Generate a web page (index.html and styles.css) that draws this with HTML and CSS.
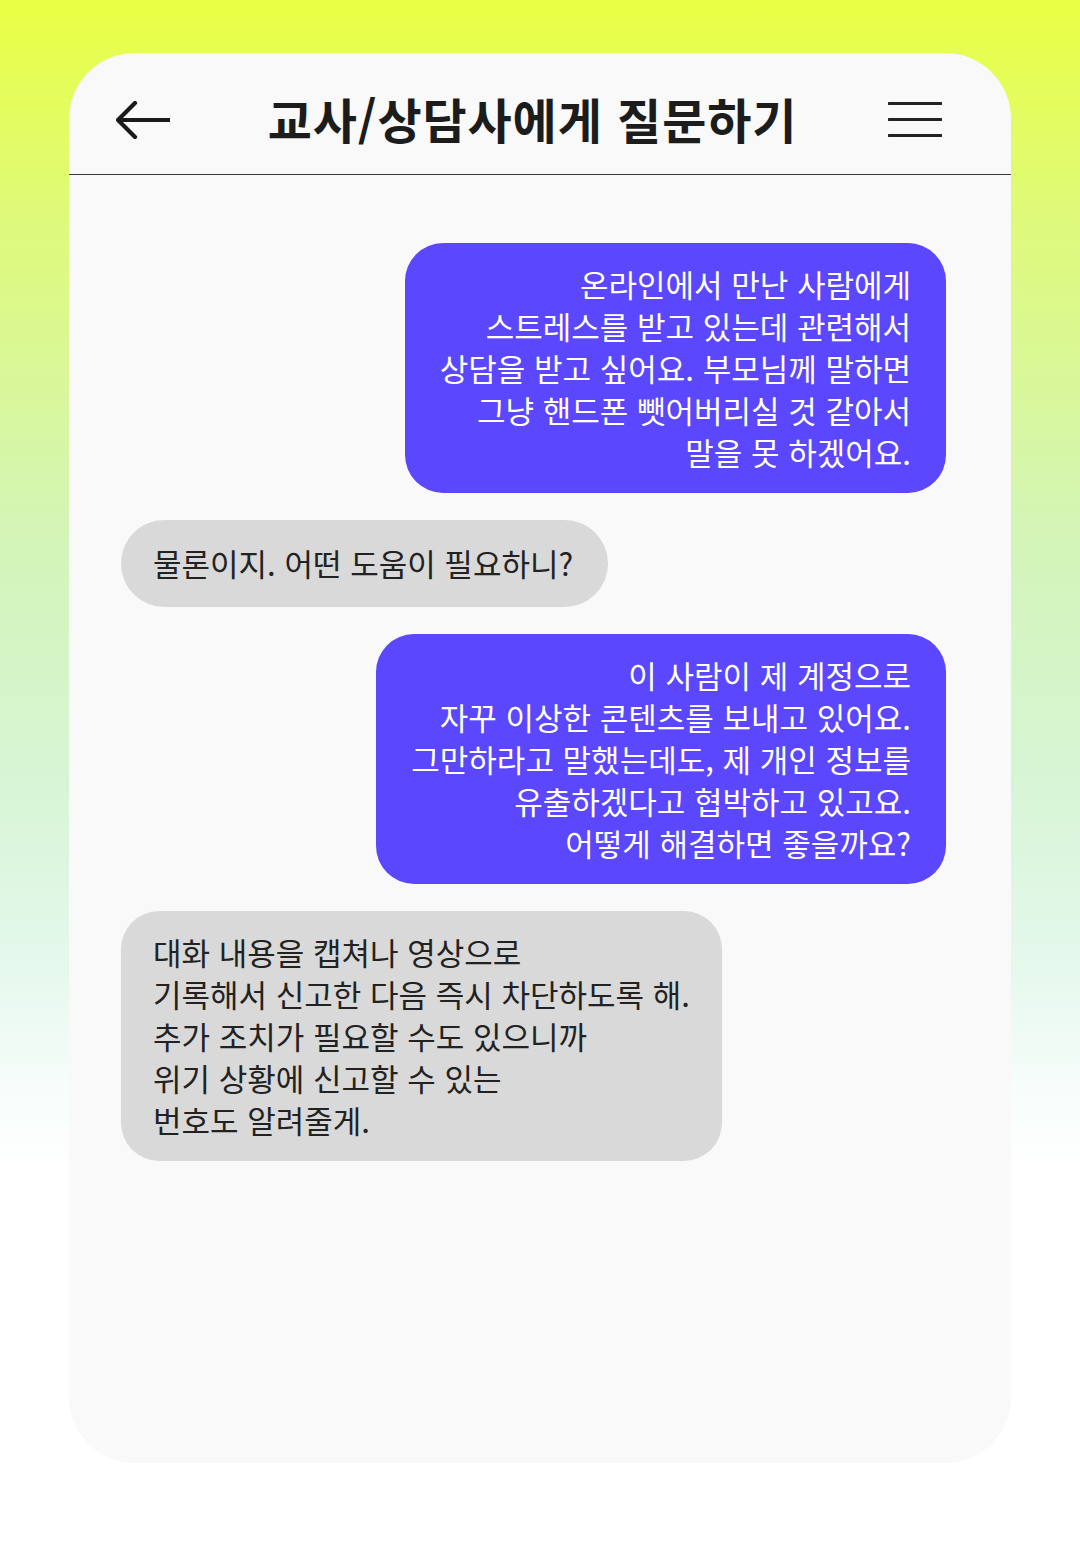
FILE: index.html
```html
<!DOCTYPE html>
<html lang="ko">
<head>
<meta charset="utf-8">
<title>교사/상담사에게 질문하기</title>
<link rel="stylesheet" href="styles.css">
</head>
<body>
<div class="page">
  <div class="card">
    <header class="header">
      <button class="icon-btn back" aria-label="뒤로">
        <svg width="54" height="38" viewBox="0 0 54 38">
          <path d="M3 19 H54 M19 2 L2 19 L19 36" fill="none" stroke="#1a1a1a" stroke-width="4.2" stroke-linecap="round" stroke-linejoin="round"/>
        </svg>
      </button>
      <h1 class="title">교사/상담사에게 질문하기</h1>
      <button class="icon-btn menu" aria-label="메뉴">
        <svg width="54" height="38" viewBox="0 0 54 38">
          <path d="M1 2.5 H53 M1 18.5 H53 M1 34.5 H53" fill="none" stroke="#222" stroke-width="3.2" stroke-linecap="round"/>
        </svg>
      </button>
    </header>
    <main class="chat">
      <div class="bubble sent">온라인에서 만난 사람에게<br>스트레스를 받고 있는데 관련해서<br>상담을 받고 싶어요. 부모님께 말하면<br>그냥 핸드폰 뺏어버리실 것 같아서<br>말을 못 하겠어요.</div>
      <div class="bubble received single">물론이지. 어떤 도움이 필요하니?</div>
      <div class="bubble sent">이 사람이 제 계정으로<br>자꾸 이상한 콘텐츠를 보내고 있어요.<br>그만하라고 말했는데도, 제 개인 정보를<br>유출하겠다고 협박하고 있고요.<br>어떻게 해결하면 좋을까요?</div>
      <div class="bubble received">대화 내용을 캡쳐나 영상으로<br>기록해서 신고한 다음 즉시 차단하도록 해.<br>추가 조치가 필요할 수도 있으니까<br>위기 상황에 신고할 수 있는<br>번호도 알려줄게.</div>
    </main>
  </div>
</div>
</body>
</html>
```

FILE: styles.css
```css
* { box-sizing: border-box; }

html, body {
  margin: 0;
  padding: 0;
}

body {
  width: 1080px;
  height: 1547px;
  overflow: hidden;
  font-family: "Noto Sans CJK KR", "Noto Sans", sans-serif;
  background: linear-gradient(180deg, #e9ff44 0%, #dffa7a 14%, #d3f5b8 35%, #d6f5d4 50%, #e4f8ec 62%, #f6fdfa 70%, #ffffff 76%, #ffffff 100%);
}

.page {
  padding: 53px 69px 0 69px;
}

.card {
  width: 942px;
  height: 1410px;
  background: #f9f9f9;
  border-radius: 66px;
  overflow: hidden;
  display: flex;
  flex-direction: column;
}

.header {
  height: 122px;
  border-bottom: 1px solid #3a3a3a;
  display: flex;
  align-items: center;
  padding: 12px 69px 0 47px;
}

.icon-btn {
  background: none;
  border: 0;
  padding: 0;
  margin: 0;
  width: 54px;
  height: 38px;
  display: flex;
  align-items: center;
  justify-content: center;
  flex: none;
}

.title {
  flex: 1;
  margin: 0;
  text-align: center;
  font-size: 48px;
  font-weight: 700;
  letter-spacing: 0.9px;
  color: #1c1c1c;
  line-height: 1;
  padding-left: 7px;
  position: relative;
  top: -2px;
}

.chat {
  display: flex;
  flex-direction: column;
  gap: 27px;
  padding: 68px 65px 0 52px;
}

.bubble {
  font-size: 31px;
  line-height: 42px;
  letter-spacing: 0;
  padding: 20px 35px 20px 35px;
  border-radius: 38px;
}

.sent {
  align-self: flex-end;
  background: #5b47fe;
  color: #ffffff;
  text-align: right;
}

.received {
  align-self: flex-start;
  background: #d9d9d9;
  color: #222222;
  text-align: left;
  padding-left: 32px;
  padding-right: 32px;
}

.received.single {
  padding: 22px 35px 23px 32px;
  border-radius: 44px;
}
```
